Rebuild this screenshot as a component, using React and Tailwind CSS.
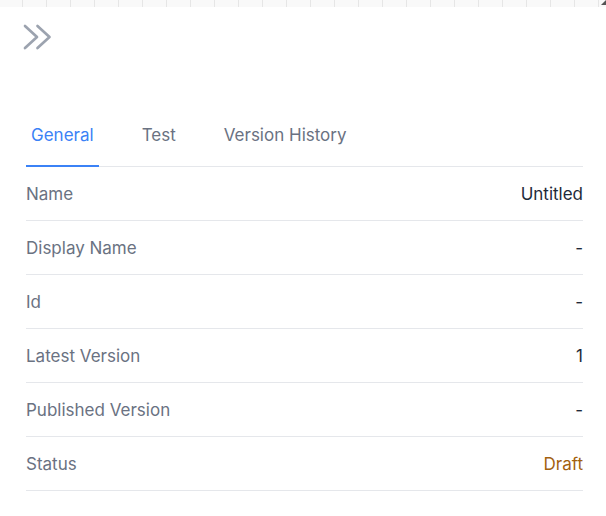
import React from 'react';

const rows = [
  { label: 'Name', value: 'Untitled' },
  { label: 'Display Name', value: '-' },
  { label: 'Id', value: '-' },
  { label: 'Latest Version', value: '1' },
  { label: 'Published Version', value: '-' },
  { label: 'Status', value: 'Draft', draft: true },
];

const tabs = ['General', 'Test', 'Version History'];

export default function App() {
  return (
    <div className="w-[606px] h-[516px] bg-white font-['Inter','Noto_Sans',sans-serif] overflow-hidden">
      {/* ruler strip */}
      <div className="relative h-[7px] bg-[#f9f9f9] flex overflow-hidden">
        <div className="w-[22px] shrink-0" />
        {Array.from({ length: 25 }).map((_, i) => (
          <div key={i} className="w-[24px] shrink-0 border-l border-[#e6e6e6]" />
        ))}
        <svg className="absolute right-0 top-0" width="6" height="6" viewBox="0 0 6 6">
          <path d="M6 0 L6 5 L1 5 Z" fill="#555" />
        </svg>
      </div>

      <div className="pl-[26px] pr-[23px] pt-[16px]">
        {/* collapse icon */}
        <svg
          className="-ml-[5px] block"
          width="33"
          height="28"
          viewBox="0 0 33 28"
          fill="none"
          stroke="#9ca3af"
          strokeWidth="2.7"
          strokeLinecap="round"
          strokeLinejoin="round"
        >
          <path d="M4 3 L16 14 L4 25" />
          <path d="M16.5 3 L28.5 14 L16.5 25" />
        </svg>

        {/* tabs */}
        <div className="mt-[64px] flex gap-[38px] border-b border-gray-200">
          {tabs.map((t, i) => (
            <button
              key={t}
              className={`-mb-px px-[5px] pt-[8px] pb-[18px] text-[17px] leading-[24px] border-b-2 ${
                i === 0 ? 'border-[#3b82f6] text-[#3b82f6]' : 'border-transparent text-gray-500'
              }`}
            >
              {t}
            </button>
          ))}
        </div>

        {/* properties */}
        <div>
          {rows.map(r => (
            <div key={r.label} className="h-[54px] pt-px flex items-center justify-between border-b border-gray-200 text-[17px] leading-[24px]">
              <span className="text-gray-500">{r.label}</span>
              <span className={r.draft ? 'text-[#a3610f]' : 'text-gray-800'}>{r.value}</span>
            </div>
          ))}
        </div>
      </div>
    </div>
  );
}
